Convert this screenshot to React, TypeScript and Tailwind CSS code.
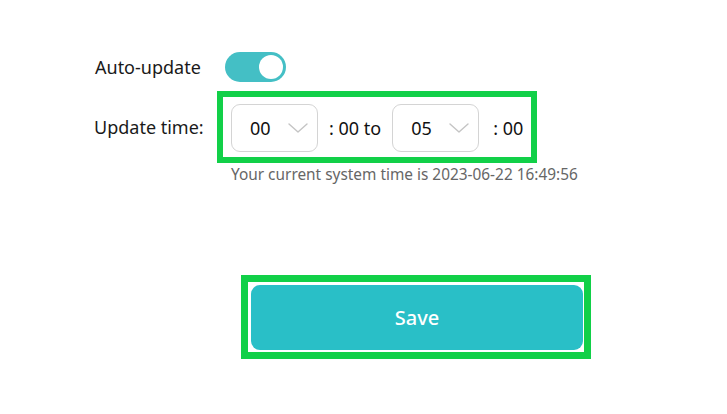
import React from "react";

function Chevron() {
  return (
    <svg width="20" height="10" viewBox="0 0 20 10" fill="none">
      <path d="M1 1 L10 9 L19 1" stroke="#c4c4c4" strokeWidth="1.4" strokeLinecap="round" strokeLinejoin="round" />
    </svg>
  );
}

function Select({ value }: { value: string }) {
  return (
    <div className="flex items-center w-[87px] h-[48px] border border-[#d4d4d4] rounded-[9px] bg-white pl-[18px] pr-[9px]">
      <span className="text-[18px] text-[#111] leading-none">{value}</span>
      <span className="ml-auto flex items-center">
        <Chevron />
      </span>
    </div>
  );
}

export default function App() {
  return (
    <div className="w-[727px] h-[414px] bg-white font-['Noto_Sans',sans-serif] pt-[52px]">
      <div className="flex items-center h-[30px]">
        <span className="ml-[95px] w-[130px] text-[18px] text-[#1a1a1a] leading-none">Auto-update</span>
        <div className="relative w-[61px] h-[30px] rounded-full bg-[#44bfc5]">
          <div className="absolute right-[3px] top-[3px] w-[24px] h-[24px] rounded-full bg-white" />
        </div>
      </div>
      <div className="flex items-center mt-[9px]">
        <span className="ml-[94px] w-[123px] text-[18px] text-[#1a1a1a] leading-none">Update time:</span>
        <div className="flex items-center w-[320px] h-[72px] border-[6px] border-[#11d048] pl-[8px] pt-[1px]">
          <Select value="00" />
          <span className="ml-[11px] text-[18px] text-[#111] leading-none">: 00 to</span>
          <div className="ml-[11px]">
            <Select value="05" />
          </div>
          <span className="ml-[14px] text-[18px] text-[#111] leading-none">: 00</span>
        </div>
      </div>
      <div className="ml-[231px] mt-[2px] text-[15.4px] leading-[20px] text-[#666]">
        Your current system time is 2023-06-22 16:49:56
      </div>
      <div className="ml-[241px] mt-[90px] w-[350px] h-[84px] border-[7px] border-[#11d048] pl-[3px] pt-[3px] pr-[1px] pb-[2px]">
        <div className="w-full h-full rounded-[9px] bg-[#29bfc7] flex items-center justify-center">
          <span className="text-white text-[20px] font-medium leading-none">Save</span>
        </div>
      </div>
    </div>
  );
}
